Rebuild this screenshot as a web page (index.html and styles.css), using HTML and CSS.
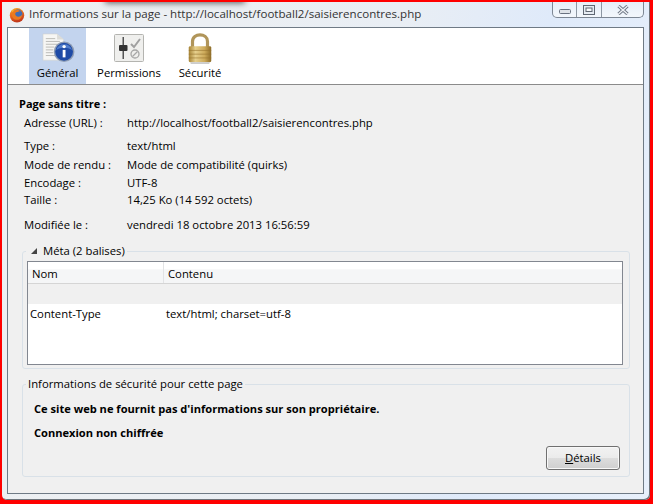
FILE: index.html
```html
<!DOCTYPE html>
<html lang="fr">
<head>
  <meta charset="UTF-8" />
  <meta name="viewport" content="width=device-width, initial-scale=1.0"/>
  <title>Informations sur la page</title>
  <link rel="stylesheet" href="styles.css">
</head>
<body>

<div class="window">
  <div class="titlebar">
    <div class="title-smudge"></div>
    <svg class="app-icon" width="16" height="16" viewBox="0 0 16 16">
      <defs>
        <linearGradient id="fox-fur" x1="0" x2="0.300" y1="0" y2="1">
          <stop offset="0" stop-color="#f6a623"/>
          <stop offset="0.550" stop-color="#e9661c"/>
          <stop offset="1" stop-color="#c23a1c"/>
        </linearGradient>
      </defs>
      <circle cx="8" cy="8.300" r="7.200" fill="url(#fox-fur)"/>
      <circle cx="9" cy="7" r="4.400" fill="#3f6db5"/>
      <path d="M5.500 3.500 C7.500 2.500 10.500 2.800 12.200 4.500 C10.500 3.800 9.500 4.200 9 5 C7.500 4.800 6.500 5.500 6.200 6.800 C6.200 8.500 7.500 9.800 9.500 9.700 C11 9.600 12.300 8.800 13 7.500 C13.300 10.500 11 12.800 8 12.800 C5 12.800 2.800 10.500 2.800 7.500 C2.800 5.500 3.500 4 4.500 3 C4.500 3.500 5 3.700 5.500 3.500 Z" fill="#ea7a1e"/>
      <path d="M3 2 C3.500 3.500 4 3.500 5 3 L3.500 5.500 Z" fill="#f8c030"/>
    </svg>
    <span class="title-text">Informations sur la page - http://localhost/football2/saisierencontres.php</span>
    <div class="win-buttons">
      <div class="win-btn win-min">
        <svg width="12" height="5" viewBox="0 0 12 5"><rect x="0.5" y="0.5" width="11" height="4" rx="1" fill="#dfe3e8" stroke="#6a7280"/></svg>
      </div>
      <div class="win-btn">
        <svg width="12" height="10" viewBox="0 0 12 10"><rect x="0.5" y="0.5" width="11" height="9" fill="#e6ecf3" stroke="#5f6773"/><rect x="3" y="3" width="6" height="3.5" fill="#f6f8fb" stroke="#5f6773"/></svg>
      </div>
      <div class="win-btn win-close">
        <svg width="12" height="10" viewBox="0 0 12 10"><path d="M1.500 1 L10.500 9 M10.500 1 L1.500 9" stroke="#6a7280" stroke-width="3.200"/><path d="M1.500 1 L10.500 9 M10.500 1 L1.500 9" stroke="#eef1f5" stroke-width="1.500"/></svg>
      </div>
    </div>
  </div>

  <div class="content">
    <div class="toolbar">
      <div class="tab selected">
        <svg width="36" height="30" viewBox="0 0 38 32">
          <path d="M3 1 H18 L25 7 V29 H3 Z" fill="#f6f6f4" stroke="#d0d0cc" stroke-width="0.6"/>
          <path d="M18 1 V7 H25 Z" fill="#dcdcd8"/>
          <path d="M6 6 H16 M6 9 H21 M6 12 H21 M6 15 H15 M6 18 H14 M6 21 H14 M6 24 H16" stroke="#b9b9b4"/>
          <circle cx="25.500" cy="20" r="11" fill="#8d9cb4"/>
          <circle cx="25.500" cy="20" r="9.500" fill="#1f4ba6"/>
          <path d="M17 18 A9 9 0 0 1 34 18 C29 15 22 15 17 18 Z" fill="#4f7ccb"/>
          <circle cx="25.500" cy="14.500" r="1.800" fill="#fff"/>
          <rect x="24" y="18" width="3" height="8" fill="#fff"/>
        </svg>
        <span>Général</span>
      </div>
      <div class="tab">
        <svg width="32" height="30" viewBox="0 0 32 30">
          <rect x="1.500" y="1.500" width="29" height="27" rx="1" fill="#efefed" stroke="#b4b4b0"/>
          <rect x="9.500" y="4" width="1.500" height="22" fill="#555"/>
          <rect x="6" y="12" width="8.500" height="6" rx="1" fill="#333"/>
          <path d="M18 11 L21 14 L27 6" fill="none" stroke="#a0a0a0" stroke-width="2"/>
          <circle cx="22" cy="21" r="4" fill="none" stroke="#a6a6a6" stroke-width="1.300"/>
          <path d="M19.500 23.500 L24.500 18.500" stroke="#a6a6a6" stroke-width="1.300"/>
        </svg>
        <span>Permissions</span>
      </div>
      <div class="tab">
        <svg width="30" height="32" viewBox="0 0 32 34">
          <defs>
            <linearGradient id="lock-body" x1="0" x2="1" y1="0" y2="0">
              <stop offset="0" stop-color="#a78436"/>
              <stop offset="0.3" stop-color="#e6cf8c"/>
              <stop offset="0.7" stop-color="#cdaa5a"/>
              <stop offset="1" stop-color="#8d6c28"/>
            </linearGradient>
          </defs>
          <path d="M8 15 V9 C8 -0.500 24 -0.500 24 9 V15" fill="none" stroke="#b0955a" stroke-width="3.400"/>
          <rect x="4" y="14" width="24" height="17" rx="1.500" fill="url(#lock-body)"/>
          <path d="M4 18.500 H28 M4 22.500 H28 M4 26.500 H28" stroke="#94702c" stroke-opacity="0.600"/>
          <rect x="6" y="31" width="20" height="2" fill="#cccccc"/>
        </svg>
        <span>Sécurité</span>
      </div>
    </div>

    <div class="panel">
      <div class="page-title">Page sans titre :</div>

      <div class="info-row address"><span class="label">Adresse (URL) :</span><span>http://localhost/football2/saisierencontres.php</span></div>

      <div class="info-group">
        <div class="info-row"><span class="label">Type :</span><span>text/html</span></div>
        <div class="info-row row-low"><span class="label">Mode de rendu :</span><span>Mode de compatibilité (quirks)</span></div>
        <div class="info-row"><span class="label">Encodage :</span><span>UTF-8</span></div>
        <div class="info-row row-tight"><span class="label">Taille :</span><span>14,25 Ko (14 592 octets)</span></div>
      </div>

      <div class="info-row modified"><span class="label">Modifiée le :</span><span>vendredi 18 octobre 2013 16:56:59</span></div>

      <fieldset class="group meta-group">
        <legend><span class="twisty"></span>Méta (2 balises)</legend>
        <div class="meta-table">
          <div class="meta-head">
            <div class="col-name">Nom</div>
            <div class="col-value">Contenu</div>
          </div>
          <div class="meta-stripe"></div>
          <div class="meta-row">
            <div class="col-name">Content-Type</div>
            <div class="col-value">text/html; charset=utf-8</div>
          </div>
        </div>
      </fieldset>

      <fieldset class="group security-group">
        <legend>Informations de sécurité pour cette page</legend>
        <p class="security-line">Ce site web ne fournit pas d'informations sur son propriétaire.</p>
        <p class="security-line">Connexion non chiffrée</p>
        <div class="security-actions">
          <button class="details-btn"><u>D</u>étails</button>
        </div>
      </fieldset>
    </div>
  </div>
</div>

</body>
</html>
```

FILE: styles.css
```css
html, body {
  margin: 0;
  height: 100%;
}

body {
  width: 653px;
  height: 504px;
  overflow: hidden;
  box-sizing: border-box;
  background-color: #ff0000;
  padding: 2px 3px 4px 2px;
  font-family: "Open Sans", "Noto Sans", sans-serif;
  font-size: 11.3px;
  color: #000;
}

.window {
  height: 100%;
  box-sizing: border-box;
  padding: 0 6px 6px 5px;
  background: linear-gradient(100deg, #eef0f2 0%, #e9eef4 55%, #dfeafa 75%, #e8f0fb 100%);
  border-radius: 0 0 5px 5px;
  box-shadow: inset -1px -1px 0 #6d7278;
  display: flex;
  flex-direction: column;
  overflow: hidden;
}

.titlebar {
  height: 25px;
  display: flex;
  align-items: flex-start;
  position: relative;
}

/* blurred title of the window behind the glass */
.title-smudge {
  position: absolute;
  left: 98px;
  top: -6px;
  width: 140px;
  height: 7px;
  background-color: #55585c;
  filter: blur(3px);
}

.app-icon {
  margin: 5px 0 0 2px;
}

.title-text {
  margin: 4px 0 0 4px;
  font-size: 11.55px;
  color: #333;
  white-space: nowrap;
}

.win-buttons {
  margin-left: auto;
  height: 15px;
  display: flex;
  border: 1px solid #7d8794;
  border-top: none;
  border-radius: 0 0 5px 5px;
  background: linear-gradient(#e6eef8, #f3f7fc);
}

.win-btn {
  width: 24px;
  display: flex;
  align-items: center;
  justify-content: center;
  border-right: 1px solid #8d97a3;
}

.win-min {
  align-items: flex-end;
  padding-bottom: 3px;
  box-sizing: border-box;
}

.win-close {
  width: 41px;
  border-right: none;
}

.content {
  flex: 1;
  display: flex;
  flex-direction: column;
  min-height: 0;
  border: 1px solid #6f7a85;
  background-color: #fff;
}

.toolbar {
  height: 56px;
  flex-shrink: 0;
  display: flex;
  padding-left: 21px;
  border-bottom: 1px solid #8b8b8b;
}

.tab {
  width: 57px;
  display: flex;
  flex-direction: column;
  align-items: center;
  justify-content: space-between;
  padding: 5px 0 4px;
  box-sizing: border-box;
  white-space: nowrap;
}

.tab + .tab {
  margin-left: 8px;
  width: 70px;
}

.tab + .tab + .tab {
  margin-left: 5px;
  width: 62px;
}

.tab.selected {
  background-color: #c3d4ee;
}

.panel {
  flex: 1;
  min-height: 0;
  background-color: #f0f0f0;
  padding: 11px 13px 15px 11px;
}

.page-title {
  font-weight: 700;
  font-size: 11px;
  height: 16px;
  line-height: 16px;
}

.info-row {
  display: flex;
  height: 18px;
  line-height: 18px;
  margin-left: 5px;
  white-space: nowrap;
}

.label {
  width: 103px;
}

.address {
  margin-top: 2px;
}

.info-group {
  margin-top: 5px;
}

.row-low {
  margin-top: 1px;
}

.row-tight {
  margin-top: -1px;
}

.modified {
  margin-top: 7px;
}

.group {
  margin: 0;
  padding: 0;
  min-width: 0;
  border: 1px solid #d9e1e8;
  border-radius: 3px;
}

.group legend {
  padding: 0 2px;
  line-height: 16px;
}

.twisty {
  display: inline-block;
  width: 0;
  height: 0;
  margin: 0 6px 1px 3px;
  border-style: solid;
  border-width: 0 0 6px 6px;
  border-color: transparent transparent #444 transparent;
}

.meta-group {
  margin: 9px 0 0 3px;
  height: 126px;
  box-sizing: border-box;
  padding: 2px 6px 0 4px;
}

.meta-group legend {
  margin-left: -1px;
}

.meta-table {
  height: 104px;
  box-sizing: border-box;
  border: 1px solid #828790;
  background-color: #fff;
}

.meta-head {
  display: flex;
  height: 21px;
  line-height: 24px;
  border-bottom: 1px solid #d5d5d5;
  background: linear-gradient(#fff 0, #fff 35%, #f5f6f7 36%, #f5f6f7 100%);
}

.meta-head .col-name {
  width: 131px;
  padding-left: 4px;
  border-right: 1px solid #e2e3e5;
}

.meta-head .col-value {
  padding-left: 4px;
}

.meta-stripe {
  height: 20px;
  background-color: #f0f0f0;
}

.meta-row {
  display: flex;
  height: 20px;
  line-height: 20px;
}

.meta-row .col-name {
  width: 134px;
  padding-left: 2px;
}

.meta-row .col-value {
  padding-left: 2px;
}

.security-group {
  margin: 7px 0 0 3px;
  height: 101px;
  box-sizing: border-box;
  padding: 0 9px 0 11px;
}

.security-group legend {
  margin-left: -8px;
}

.security-line {
  margin: 8px 0 0;
  font-weight: 700;
  font-size: 11.1px;
  line-height: 18px;
}

.security-line + .security-line {
  margin-top: 6px;
}

.security-actions {
  display: flex;
  justify-content: flex-end;
  margin-top: 4px;
}

.details-btn {
  width: 74px;
  height: 24px;
  padding: 0 0 2px;
  font: inherit;
  color: #000;
  border: 1px solid #707070;
  border-radius: 3px;
  background: linear-gradient(#f2f2f2 0, #ebebeb 48%, #dddddd 50%, #cfcfcf 100%);
  box-shadow: inset 0 0 0 1px #f8f8f8;
}
```
